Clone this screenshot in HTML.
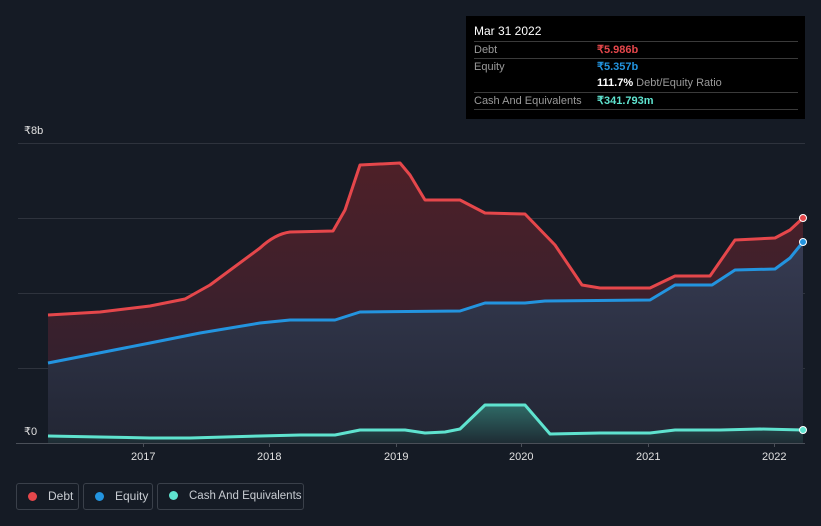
<!DOCTYPE html>
<html><head><meta charset="utf-8"><style>
body{margin:0;width:821px;height:526px;background:#151b25;font-family:"Liberation Sans",sans-serif;overflow:hidden;position:relative}
.tip{position:absolute;left:466px;top:16px;width:339px;height:103px;background:#000;color:#fff;font-size:11px}
.row{position:absolute;left:8px;width:324px;border-top:1px solid #3a3a3a;height:16px;line-height:16px}
.lab{color:#9a9a9a}
.val{position:absolute;left:123px;top:0;font-weight:bold}
.leg{position:absolute;top:483px;height:27px;border:1px solid #3a404a;border-radius:3px;color:#c8ccd2;font-size:12px;line-height:25px;box-sizing:border-box;white-space:nowrap;overflow:hidden}
.dot{display:inline-block;width:9px;height:9px;border-radius:50%;margin:0 11px 0 11px;vertical-align:-1px}
.ax{position:absolute;color:#e0e0e0;font-size:11px}
</style></head><body>
<svg width="821" height="526" style="position:absolute;left:0;top:0">
<defs>
<linearGradient id="dg" x1="0" y1="0" x2="0" y2="1"><stop offset="0" stop-color="#4e2028"/><stop offset="1" stop-color="#2a2030"/></linearGradient>
<linearGradient id="eg" x1="0" y1="0" x2="0" y2="1"><stop offset="0" stop-color="#363b52"/><stop offset="1" stop-color="#222634"/></linearGradient>
<linearGradient id="cg" x1="0" y1="0" x2="0" y2="1"><stop offset="0" stop-color="#2f6a66"/><stop offset="1" stop-color="#1e2c34"/></linearGradient>
</defs>
<g stroke="#2e333d" stroke-width="1">
<line x1="18" y1="143.5" x2="805" y2="143.5"/><line x1="18" y1="218.5" x2="805" y2="218.5"/><line x1="18" y1="293.5" x2="805" y2="293.5"/><line x1="18" y1="368.5" x2="805" y2="368.5"/>
</g>
<path fill="url(#dg)" d="M48,315 L100,312 L150,306 L185,299 L210,285 L260,248 Q275,234 290,232 L333,231 L345,210 L360,165 L400,163 L410,175 L425,200 L460,200 L485,213 L525,214 L555,245 L582,285 L600,288 L650,288 L675,276 L710,276 L735,240 L775,238 L790,230 L803,218 L803,443 L48,443Z"/>
<path fill="url(#eg)" d="M48,363 L150,343 L200,333 L260,323 L290,320 L335,320 L360,312 L460,311 L485,303 L525,303 L545,301 L650,300 L675,285 L712,285 L735,270 L775,269 L790,258 L803,242 L803,443 L48,443Z"/>
<path fill="url(#cg)" d="M48,436 L100,437 L150,438 L190,438 L260,436 L300,435 L335,435 L360,430 L405,430 L425,433 L445,432 L460,429 L485,405 L525,405 L550,434 L600,433 L650,433 L675,430 L720,430 L760,429 L803,430 L803,443 L48,443Z"/>
<g fill="none" stroke-width="3" stroke-linejoin="round">
<path stroke="#e5474b" d="M48,315 L100,312 L150,306 L185,299 L210,285 L260,248 Q275,234 290,232 L333,231 L345,210 L360,165 L400,163 L410,175 L425,200 L460,200 L485,213 L525,214 L555,245 L582,285 L600,288 L650,288 L675,276 L710,276 L735,240 L775,238 L790,230 L803,218"/>
<path stroke="#2394df" d="M48,363 L150,343 L200,333 L260,323 L290,320 L335,320 L360,312 L460,311 L485,303 L525,303 L545,301 L650,300 L675,285 L712,285 L735,270 L775,269 L790,258 L803,242"/>
<path stroke="#5fe3cf" d="M48,436 L100,437 L150,438 L190,438 L260,436 L300,435 L335,435 L360,430 L405,430 L425,433 L445,432 L460,429 L485,405 L525,405 L550,434 L600,433 L650,433 L675,430 L720,430 L760,429 L803,430"/>
</g>
<circle cx="803" cy="218" r="3.5" fill="#e5474b" stroke="#fff" stroke-width="1"/>
<circle cx="803" cy="242" r="3.5" fill="#2394df" stroke="#fff" stroke-width="1"/>
<circle cx="803" cy="430" r="3.5" fill="#5fe3cf" stroke="#fff" stroke-width="1"/>
<line x1="16" y1="443.5" x2="805" y2="443.5" stroke="#4a4f58"/>
<g stroke="#4a4f58"><line x1="143.5" y1="443" x2="143.5" y2="447"/><line x1="269.5" y1="443" x2="269.5" y2="447"/><line x1="396.5" y1="443" x2="396.5" y2="447"/><line x1="521.5" y1="443" x2="521.5" y2="447"/><line x1="648.5" y1="443" x2="648.5" y2="447"/><line x1="774.5" y1="443" x2="774.5" y2="447"/></g>
</svg>
<div class="ax" style="left:24px;top:124px">₹8b</div>
<div class="ax" style="left:24px;top:425px">₹0</div>
<div class="ax" style="left:131px;top:451px">2017</div>
<div class="ax" style="left:257px;top:451px">2018</div>
<div class="ax" style="left:384px;top:451px">2019</div>
<div class="ax" style="left:509px;top:451px">2020</div>
<div class="ax" style="left:636px;top:451px">2021</div>
<div class="ax" style="left:762px;top:451px">2022</div>
<div class="tip">
<div style="position:absolute;left:8px;top:8px;font-size:12px">Mar 31 2022</div>
<div class="row" style="top:25px"><span class="lab">Debt</span><span class="val" style="color:#e5474b">₹5.986b</span></div>
<div class="row" style="top:42px"><span class="lab">Equity</span><span class="val" style="color:#2394df">₹5.357b</span></div>
<div class="row" style="top:59px;border:none"><span class="val">111.7% <span style="color:#9a9a9a;font-weight:normal">Debt/Equity Ratio</span></span></div>
<div class="row" style="top:76px"><span class="lab">Cash And Equivalents</span><span class="val" style="color:#5fe3cf">₹341.793m</span></div>
<div class="row" style="top:93px;height:0"></div>
</div>
<div class="leg" style="left:16px;width:63px"><span class="dot" style="background:#e5474b"></span>Debt</div>
<div class="leg" style="left:83px;width:70px"><span class="dot" style="background:#2394df"></span>Equity</div>
<div class="leg" style="left:157px;width:147px;font-size:11.5px"><span class="dot" style="background:#5fe3cf"></span>Cash And Equivalents</div>
</body></html>
